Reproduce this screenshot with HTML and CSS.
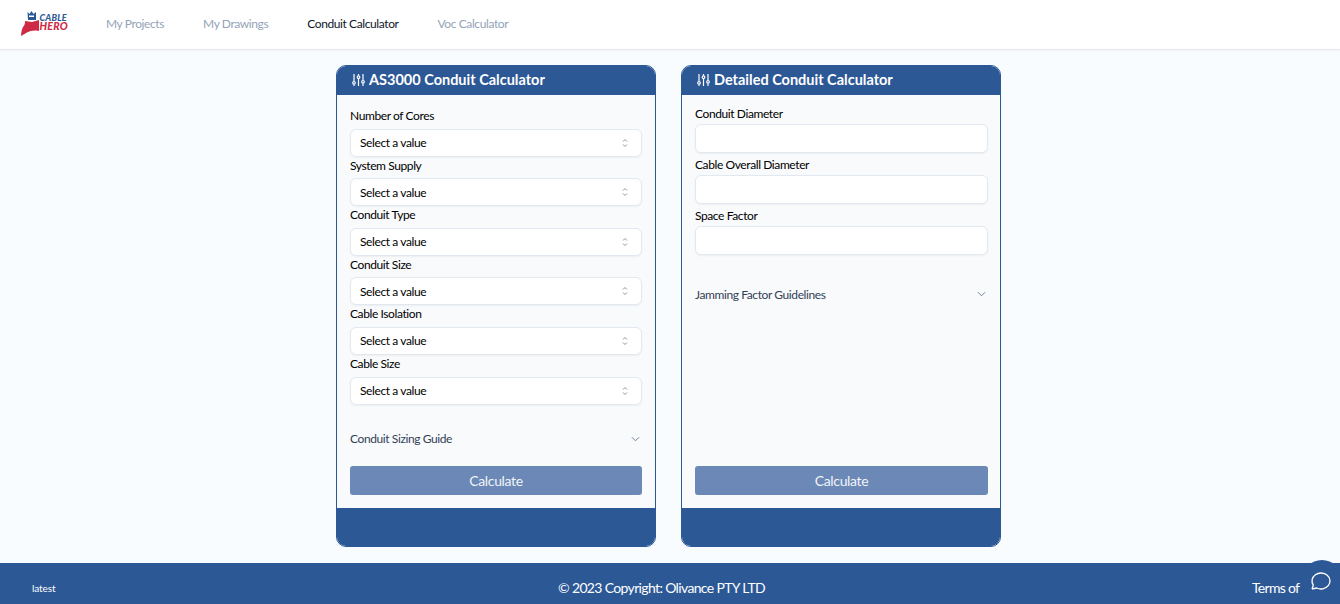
FILE: index.html
```html
<!DOCTYPE html>
<html lang="en">
<head>
<meta charset="utf-8">
<title>Cable Hero</title>
<link rel="stylesheet" href="styles.css">
</head>
<body>
<header class="nav">
  <a class="logo" href="#">
    <svg width="50" height="28" viewBox="0 0 50 28">
      <path d="M5 12 L12 13 L19 11 L19 22 C14 21 10 22 7 23.500 L1 27 C1 23 2 20 3 18 C5 16 5 14 5 12Z" fill="#cf2a45"/>
      <path d="M8 11 L7.500 3 L9.500 5 L11.500 2 L13.500 5 L16 3 L16 11Z" fill="#2c5896"/>
      <rect x="9" y="6.500" width="5" height="1.500" fill="#fff"/>
      <text x="19.500" y="12" class="logo-a">CABLE</text>
      <text x="19.500" y="21" class="logo-b">HERO</text>
    </svg>
  </a>
  <nav class="links">
    <a href="#">My Projects</a>
    <a href="#">My Drawings</a>
    <a href="#" class="active">Conduit Calculator</a>
    <a href="#">Voc Calculator</a>
  </nav>
</header>

<main class="main">
  <section class="card">
    <h2 class="card-head">
      <svg class="sliders" viewBox="0 0 13 14"><path d="M2 1v7M2 11.500V13M6.500 1v1.500M6.500 6v7M11 1v6M11 10.500V13"/><circle cx="2" cy="9.800" r="1.300"/><circle cx="6.500" cy="4.200" r="1.300"/><circle cx="11" cy="8.800" r="1.300"/></svg>
      AS3000 Conduit Calculator
    </h2>
    <div class="card-body left">
      <label class="label">Number of Cores</label>
      <div class="select">Select a value<svg class="updown" viewBox="0 0 6 10"><path d="M1 3.500 3 1.500l2 2M1 6.500l2 2 2-2"/></svg></div>
      <label class="label">System Supply</label>
      <div class="select">Select a value<svg class="updown" viewBox="0 0 6 10"><path d="M1 3.500 3 1.500l2 2M1 6.500l2 2 2-2"/></svg></div>
      <label class="label">Conduit Type</label>
      <div class="select">Select a value<svg class="updown" viewBox="0 0 6 10"><path d="M1 3.500 3 1.500l2 2M1 6.500l2 2 2-2"/></svg></div>
      <label class="label">Conduit Size</label>
      <div class="select">Select a value<svg class="updown" viewBox="0 0 6 10"><path d="M1 3.500 3 1.500l2 2M1 6.500l2 2 2-2"/></svg></div>
      <label class="label">Cable Isolation</label>
      <div class="select">Select a value<svg class="updown" viewBox="0 0 6 10"><path d="M1 3.500 3 1.500l2 2M1 6.500l2 2 2-2"/></svg></div>
      <label class="label">Cable Size</label>
      <div class="select">Select a value<svg class="updown" viewBox="0 0 6 10"><path d="M1 3.500 3 1.500l2 2M1 6.500l2 2 2-2"/></svg></div>
      <div class="accordion">Conduit Sizing Guide<svg class="chev" viewBox="0 0 10 6"><path d="M1 1l4 4 4-4"/></svg></div>
      <button class="btn">Calculate</button>
    </div>
    <div class="card-foot"></div>
  </section>

  <section class="card">
    <h2 class="card-head">
      <svg class="sliders" viewBox="0 0 13 14"><path d="M2 1v7M2 11.500V13M6.500 1v1.500M6.500 6v7M11 1v6M11 10.500V13"/><circle cx="2" cy="9.800" r="1.300"/><circle cx="6.500" cy="4.200" r="1.300"/><circle cx="11" cy="8.800" r="1.300"/></svg>
      Detailed Conduit Calculator
    </h2>
    <div class="card-body right">
      <label class="label">Conduit Diameter</label>
      <input class="input" type="text">
      <label class="label">Cable Overall Diameter</label>
      <input class="input" type="text">
      <label class="label">Space Factor</label>
      <input class="input" type="text">
      <div class="accordion">Jamming Factor Guidelines<svg class="chev" viewBox="0 0 10 6"><path d="M1 1l4 4 4-4"/></svg></div>
      <button class="btn">Calculate</button>
    </div>
    <div class="card-foot"></div>
  </section>
</main>

<footer class="footer">
  <span class="version">latest</span>
  <span class="copy">© 2023 Copyright: Olivance PTY LTD</span>
  <span class="terms">Terms of</span>
  <div class="chat">
    <svg viewBox="0 0 24 24" width="24" height="24"><path d="M3 20l1.300-3.900C1.976 12.663 2.874 8.228 6.400 5.726c3.526-2.501 8.590-2.296 11.845.48 3.255 2.777 3.695 7.266 1.029 10.501C16.608 19.942 11.659 20.922 7.700 19L3 20"/></svg>
  </div>
</footer>
</body>
</html>
```

FILE: styles.css
```css
* { box-sizing: border-box; }
html, body { margin: 0; height: 604px; overflow: hidden; }
body {
  background: #f8fcff;
  font-family: Lato, "Liberation Sans", sans-serif;
  font-size: 12px;
  letter-spacing: -0.4px;
  color: #000;
  display: flex;
  flex-direction: column;
}
.nav {
  height: 50px;
  background: #fff;
  border-bottom: 1px solid #e5e7eb;
  box-shadow: 0 1px 2px rgba(0,0,0,.04);
  display: flex;
  align-items: center;
  padding-left: 20px;
  flex: none;
}
.logo { display: block; width: 50px; height: 28px; margin-top: -3px; }
.logo svg { display: block; }
.logo-a, .logo-b { font-family: Lato, sans-serif; font-weight: 900; font-style: italic; }
.logo-a { fill: #2c5896; font-size: 9px; letter-spacing: .2px; }
.logo-b { fill: #cf2a45; font-size: 10.500px; letter-spacing: .3px; }
.links { display: flex; gap: 39px; margin-left: 36px; margin-top: -2px; }
.links a { color: #94a3b8; text-decoration: none; font-size: 12px; letter-spacing: -0.4px; }
.links a.active { color: #0f172a; }

.main {
  flex: 1;
  display: flex;
  justify-content: center;
  gap: 25px;
  padding: 15px 3px 16px 0;
  min-height: 0;
}
.card {
  width: 320px;
  height: 482px;
  border: 1px solid #2c5896;
  border-radius: 10px;
  overflow: hidden;
  display: flex;
  flex-direction: column;
  background: #f8fafc;
}
.card-head {
  margin: 0;
  height: 29px;
  background: #2c5896;
  color: #fff;
  font-size: 14.500px;
  font-weight: 700;
  letter-spacing: 0;
  display: flex;
  align-items: center;
  gap: 4px;
  padding: 0 0 2px 15px;
  flex: none;
}
.sliders { width: 13px; height: 14px; fill: none; stroke: #fff; stroke-width: 1.200; }
.card-body {
  flex: 1;
  display: flex;
  flex-direction: column;
  padding: 0 13px;
  min-height: 0;
}
.card-body.left { padding-top: 12px; }
.card-body.right { padding: 7px 12px 0 13px; }
.label { display: block; height: 21.600px; line-height: 17px; font-size: 12px; color: #000; flex: none; }
.right .label { height: 22px; line-height: 24px; }
.select {
  height: 28px;
  flex: none;
  background: #fff;
  border: 1px solid #e2e8f0;
  border-radius: 6px;
  box-shadow: 0 1px 2px rgba(0,0,0,.05);
  display: flex;
  align-items: center;
  justify-content: space-between;
  padding: 0 13px 0 9px;
  font-size: 12px;
  color: #000;
}
.updown { width: 6px; height: 10px; fill: none; stroke: #8b95a3; stroke-width: 1; }
.input {
  height: 29px;
  flex: none;
  width: 100%;
  background: #fff;
  border: 1px solid #e2e8f0;
  border-radius: 6px;
  box-shadow: 0 1px 2px rgba(0,0,0,.05);
  padding: 0 9px;
}
.accordion {
  display: flex;
  justify-content: space-between;
  align-items: center;
  color: #334155;
  font-size: 12px;
  padding-right: 2px;
  flex: none;
  height: 20px;
}
.left .accordion { margin-top: 24px; }
.right .accordion { margin-top: 29px; }
.chev { width: 9px; height: 6px; fill: none; stroke: #64748b; stroke-width: 1; }
.btn {
  margin-top: auto;
  margin-bottom: 13px;
  height: 29px;
  flex: none;
  width: 100%;
  background: #6b88b6;
  color: #f1f5f9;
  border: 0;
  border-radius: 3px;
  font-family: Lato, sans-serif;
  font-size: 14px;
  letter-spacing: -0.33px;
}
.card-foot { height: 38px; background: #2c5896; flex: none; }

.footer {
  height: 41px;
  flex: none;
  background: #2c5896;
  color: #fff;
  display: flex;
  align-items: center;
  position: relative;
  padding: 8px 0 0 32px;
}
.version { font-size: 10px; width: 526px; letter-spacing: -0.1px; }
.copy { font-size: 14px; width: 694px; letter-spacing: -0.65px; }
.terms { font-size: 14px; letter-spacing: -0.7px; }
.chat {
  position: absolute;
  right: -2px;
  top: -3px;
  width: 40px;
  height: 40px;
  background: #2c5896;
  border-radius: 50%;
  display: flex;
  align-items: center;
  justify-content: center;
}
.chat svg { fill: none; stroke: #fff; stroke-width: 1.300; margin: 2px 2px 0 0; }
```
